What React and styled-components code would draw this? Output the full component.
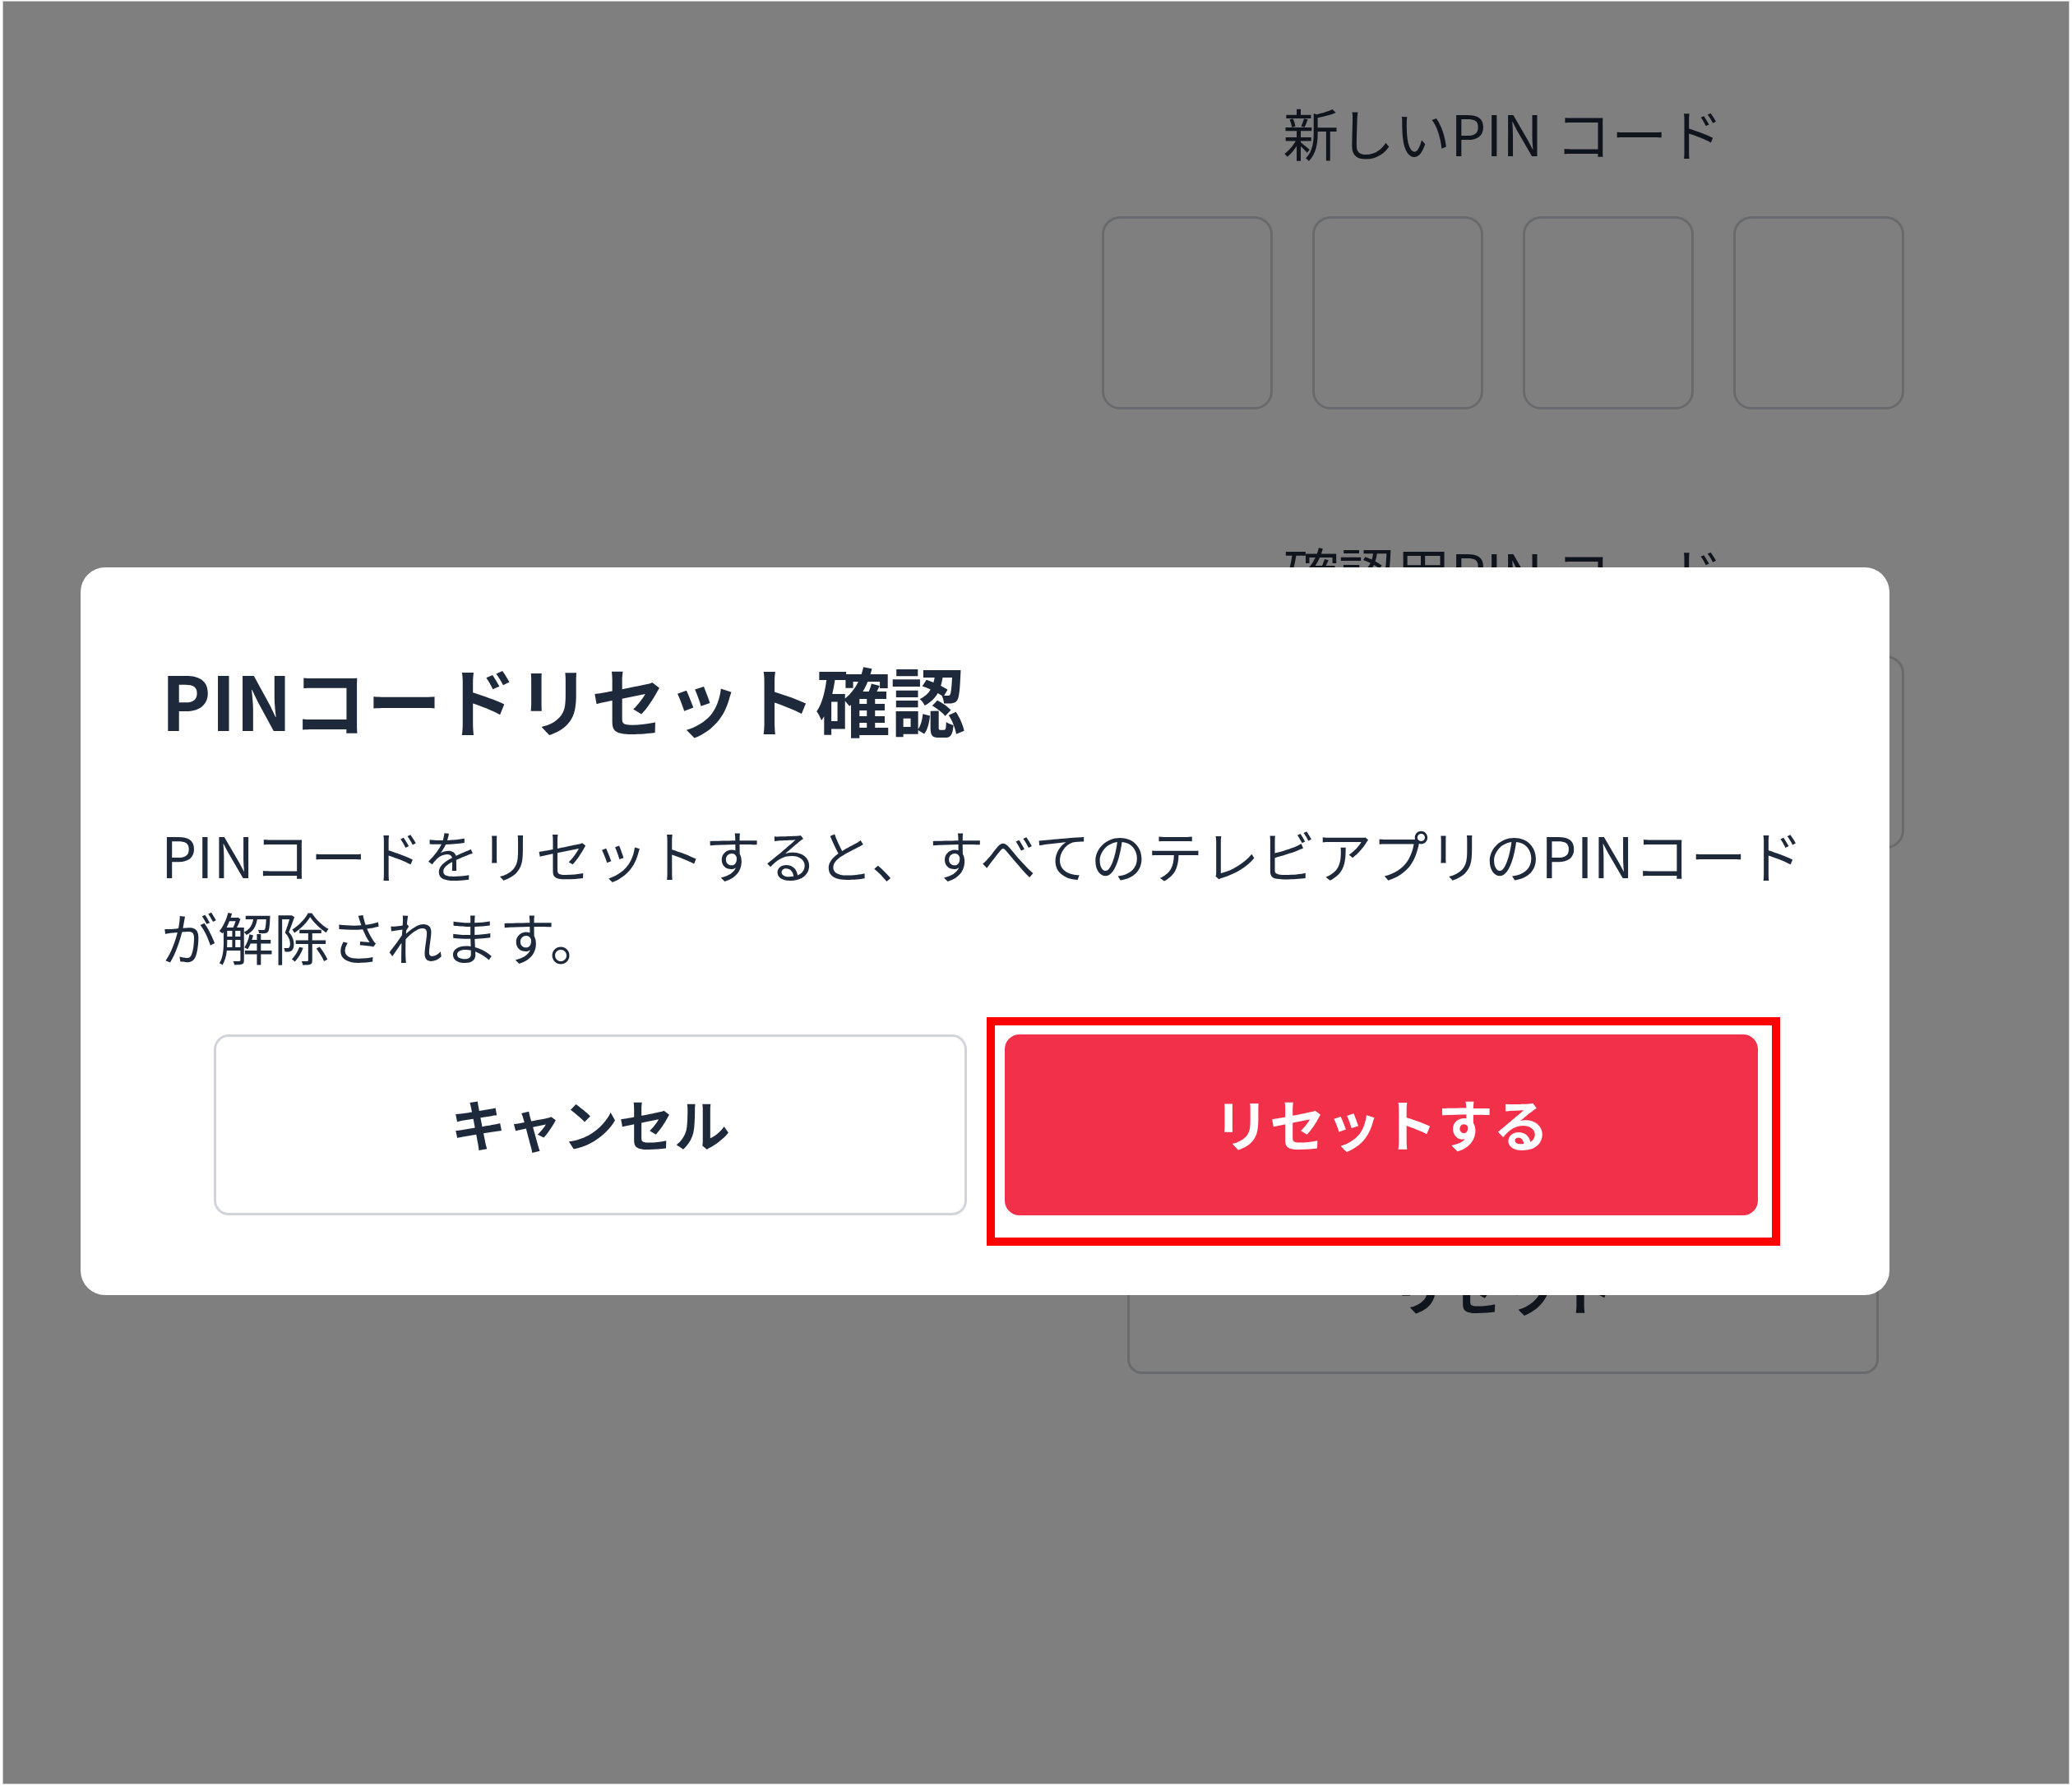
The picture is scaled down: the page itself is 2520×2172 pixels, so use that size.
import React from "react";
import styled, { createGlobalStyle } from "styled-components";

const GlobalStyle = createGlobalStyle`
  * {
    box-sizing: border-box;
  }
  body {
    margin: 0;
    background: #ffffff;
    font-family: "Noto Sans CJK JP", "Noto Sans", sans-serif;
    color: #1e293b;
  }
`;

const Frame = styled.div`
  position: relative;
  margin: 1px 3px 0 3px;
  height: 2169px;
  border: 1px solid #c9c9c9;
  background: #ffffff;
  overflow: hidden;
`;

const Page = styled.div`
  display: flex;
  justify-content: flex-end;
  padding: 109px 200px 0 0;
`;

const Column = styled.div`
  display: flex;
  flex-direction: column;
  align-items: center;
  width: 976px;
`;

const Field = styled.div`
  display: flex;
  flex-direction: column;
  align-items: center;
  margin-top: ${(p) => (p.first ? "0" : "147px")};
`;

const Label = styled.div`
  font-size: 68px;
  line-height: 100px;
  font-weight: 400;
  color: #1e293b;
  text-align: center;
`;

const PinRow = styled.div`
  display: flex;
  gap: 48px;
  margin-top: 52px;
`;

const PinBox = styled.div`
  width: 208px;
  height: 235px;
  border: 3px solid #d1d5db;
  border-radius: 22px;
  background: #ffffff;
`;

const OutlineButton = styled.button`
  margin-top: 426px;
  width: 914px;
  height: 213px;
  border: 3px solid #d1d5db;
  border-radius: 18px;
  background: #ffffff;
  font-family: inherit;
  font-size: 68px;
  font-weight: 700;
  color: #1e293b;
`;

const Overlay = styled.div`
  position: absolute;
  inset: 0;
  background: rgba(0, 0, 0, 0.5);
`;

const Modal = styled.div`
  position: absolute;
  left: 94px;
  top: 688px;
  width: 2200px;
  padding: 96px 104px 97px 98px;
  background: #ffffff;
  border-radius: 30px;
  display: flex;
  flex-direction: column;
`;

const Title = styled.h2`
  margin: 0;
  font-size: 91px;
  line-height: 126px;
  font-weight: 700;
  color: #1e293b;
`;

const Message = styled.p`
  margin: 77px 0 0;
  font-size: 68.5px;
  line-height: 100px;
  font-weight: 400;
  color: #1e293b;
`;

const Actions = styled.div`
  display: flex;
  gap: 46px;
  margin-top: 69px;
  padding: 0 56px 0 64px;
`;

const ActionSlot = styled.div`
  position: relative;
  flex: 1;
  display: flex;
`;

const ActionButton = styled.button`
  flex: 1;
  height: 220px;
  padding: 0 0 6px;
  border-radius: 18px;
  font-family: inherit;
  font-size: 68px;
  font-weight: 700;
  border: ${(p) => (p.primary ? "none" : "3px solid #d1d5db")};
  background: ${(p) => (p.primary ? "#f2304a" : "#ffffff")};
  color: ${(p) => (p.primary ? "#ffffff" : "#1e293b")};
`;

const Highlight = styled.div`
  position: absolute;
  top: -21px;
  left: -22px;
  right: -27px;
  bottom: -37px;
  border: 10px solid #ff0000;
  pointer-events: none;
`;

const fields = ["新しいPIN コード", "確認用PIN コード"];

export default function App() {
  return (
    <>
      <GlobalStyle />
      <Frame>
        <Page>
          <Column>
            {fields.map((label, i) => (
              <Field key={label} first={i === 0}>
                <Label>{label}</Label>
                <PinRow>
                  {[0, 1, 2, 3].map((n) => (
                    <PinBox key={n} />
                  ))}
                </PinRow>
              </Field>
            ))}
            <OutlineButton>リセット</OutlineButton>
          </Column>
        </Page>
        <Overlay />
        <Modal>
          <Title>PINコードリセット確認</Title>
          <Message>
            PINコードをリセットすると、すべてのテレビアプリのPINコードが解除されます。
          </Message>
          <Actions>
            <ActionSlot>
              <ActionButton>キャンセル</ActionButton>
            </ActionSlot>
            <ActionSlot>
              <ActionButton primary>リセットする</ActionButton>
              <Highlight />
            </ActionSlot>
          </Actions>
        </Modal>
      </Frame>
    </>
  );
}
